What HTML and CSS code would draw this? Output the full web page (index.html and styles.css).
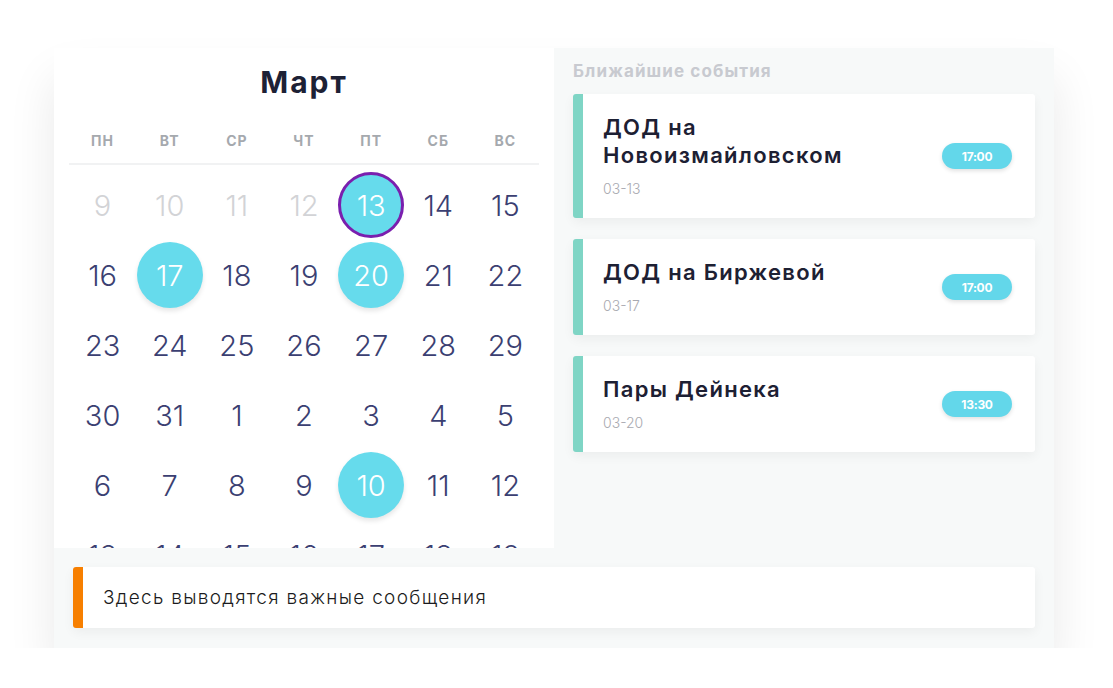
FILE: index.html
```html
<!DOCTYPE html>
<html lang="ru">
<head>
<meta charset="utf-8">
<title>Календарь</title>
<link rel="stylesheet" href="styles.css">
</head>
<body>
<div class="board">
  <div class="top">
    <section class="calendar">
      <h1 class="month">Март</h1>
      <div class="weekdays">
        <span>пн</span><span>вт</span><span>ср</span><span>чт</span><span>пт</span><span>сб</span><span>вс</span>
      </div>
      <div class="days">
        <div class="day past"><span>9</span></div>
        <div class="day past"><span>10</span></div>
        <div class="day past"><span>11</span></div>
        <div class="day past"><span>12</span></div>
        <div class="day event today"><span>13</span></div>
        <div class="day"><span>14</span></div>
        <div class="day"><span>15</span></div>

        <div class="day"><span>16</span></div>
        <div class="day event"><span>17</span></div>
        <div class="day"><span>18</span></div>
        <div class="day"><span>19</span></div>
        <div class="day event"><span>20</span></div>
        <div class="day"><span>21</span></div>
        <div class="day"><span>22</span></div>

        <div class="day"><span>23</span></div>
        <div class="day"><span>24</span></div>
        <div class="day"><span>25</span></div>
        <div class="day"><span>26</span></div>
        <div class="day"><span>27</span></div>
        <div class="day"><span>28</span></div>
        <div class="day"><span>29</span></div>

        <div class="day"><span>30</span></div>
        <div class="day"><span>31</span></div>
        <div class="day"><span>1</span></div>
        <div class="day"><span>2</span></div>
        <div class="day"><span>3</span></div>
        <div class="day"><span>4</span></div>
        <div class="day"><span>5</span></div>

        <div class="day"><span>6</span></div>
        <div class="day"><span>7</span></div>
        <div class="day"><span>8</span></div>
        <div class="day"><span>9</span></div>
        <div class="day event"><span>10</span></div>
        <div class="day"><span>11</span></div>
        <div class="day"><span>12</span></div>

        <div class="day"><span>13</span></div>
        <div class="day"><span>14</span></div>
        <div class="day"><span>15</span></div>
        <div class="day"><span>16</span></div>
        <div class="day"><span>17</span></div>
        <div class="day"><span>18</span></div>
        <div class="day"><span>19</span></div>
      </div>
    </section>

    <section class="events">
      <h2 class="events-title">Ближайшие события</h2>
      <div class="event-card">
        <div class="event-info">
          <div class="event-name">ДОД на<br>Новоизмайловском</div>
          <div class="event-date">03-13</div>
        </div>
        <span class="event-time">17:00</span>
      </div>
      <div class="event-card">
        <div class="event-info">
          <div class="event-name">ДОД на Биржевой</div>
          <div class="event-date">03-17</div>
        </div>
        <span class="event-time">17:00</span>
      </div>
      <div class="event-card">
        <div class="event-info">
          <div class="event-name">Пары Дейнека</div>
          <div class="event-date">03-20</div>
        </div>
        <span class="event-time">13:30</span>
      </div>
    </section>
  </div>

  <div class="message">Здесь выводятся важные сообщения</div>
</div>
</body>
</html>
```

FILE: styles.css
```css
* { box-sizing: border-box; }

html, body {
  margin: 0;
  padding: 0;
  background: #ffffff;
}

body {
  font-family: Inter, "Noto Sans", "DejaVu Sans", sans-serif;
  overflow: hidden;
}

.board {
  margin: 48px 0 0 54px;
  width: 1000px;
  height: 600px;
  background: #f7f9f9;
  box-shadow: 0 30px 45px rgba(0, 0, 0, 0.09);
  display: flex;
  flex-direction: column;
}

.top {
  display: grid;
  grid-template-columns: 500px 1fr;
  column-gap: 19px;
  height: 500px;
  padding-right: 19px;
}

/* Calendar */
.calendar {
  background: #ffffff;
  height: 500px;
  overflow: hidden;
  padding: 16px 15px 0;
}

.month {
  margin: 0;
  text-align: center;
  font-size: 30px;
  line-height: 36px;
  font-weight: 700;
  letter-spacing: 2px;
  color: #1d2135;
}

.weekdays {
  margin-top: 31px;
  display: grid;
  grid-template-columns: repeat(7, 1fr);
  padding-bottom: 12px;
  border-bottom: 2px solid #f1f2f3;
}

.weekdays span {
  text-align: center;
  text-transform: uppercase;
  font-size: 14px;
  line-height: 20px;
  font-weight: 700;
  letter-spacing: 1px;
  color: #a5a9ae;
}

.days {
  margin-top: 5px;
  display: grid;
  grid-template-columns: repeat(7, 1fr);
  grid-auto-rows: 70px;
}

.day {
  display: flex;
  align-items: center;
  justify-content: center;
}

.day span {
  width: 66px;
  height: 66px;
  border-radius: 50%;
  display: flex;
  align-items: center;
  justify-content: center;
  font-size: 29px;
  font-weight: 300;
  color: #3b3f72;
}

.day.past span {
  color: #d2d3d6;
}

.day.event span {
  background: #66dbec;
  color: #ffffff;
  box-shadow: 0 3px 5px rgba(0, 0, 0, 0.1);
}

.day.today span {
  border: 3px solid #7a1fae;
  box-shadow: none;
}

/* Events */
.events {
  padding-top: 13px;
  display: flex;
  flex-direction: column;
}

.events-title {
  margin: 0 0 13px;
  font-size: 17px;
  line-height: 20px;
  font-weight: 700;
  letter-spacing: 1.1px;
  color: #c8cad0;
}

.event-card {
  background: #ffffff;
  border-left: 10px solid #7fd5c5;
  border-radius: 3px;
  box-shadow: 0 4px 12px rgba(0, 0, 0, 0.05);
  padding: 19px 23px 19px 20px;
  display: flex;
  align-items: center;
  justify-content: space-between;
  margin-bottom: 21px;
}

.event-name {
  font-size: 22px;
  line-height: 28px;
  font-weight: 600;
  letter-spacing: 1.3px;
  color: #1d2033;
}

.event-date {
  margin-top: 10px;
  font-size: 14px;
  line-height: 20px;
  font-weight: 300;
  color: #a8a9b0;
}

.event-time {
  width: 70px;
  height: 26px;
  border-radius: 13px;
  background: #63d7ea;
  color: #ffffff;
  font-size: 12px;
  font-weight: 700;
  display: flex;
  align-items: center;
  justify-content: center;
  box-shadow: 0 2px 4px rgba(0, 0, 0, 0.12);
  letter-spacing: -0.3px;
}

/* Message */
.message {
  margin: 19px 19px 0;
  height: 61px;
  background: #ffffff;
  border-left: 10px solid #f77f00;
  border-radius: 3px;
  box-shadow: 0 4px 12px rgba(0, 0, 0, 0.05);
  padding-left: 20px;
  display: flex;
  align-items: center;
  font-size: 19px;
  font-weight: 300;
  letter-spacing: 1.3px;
  color: #1b1b20;
}
```
